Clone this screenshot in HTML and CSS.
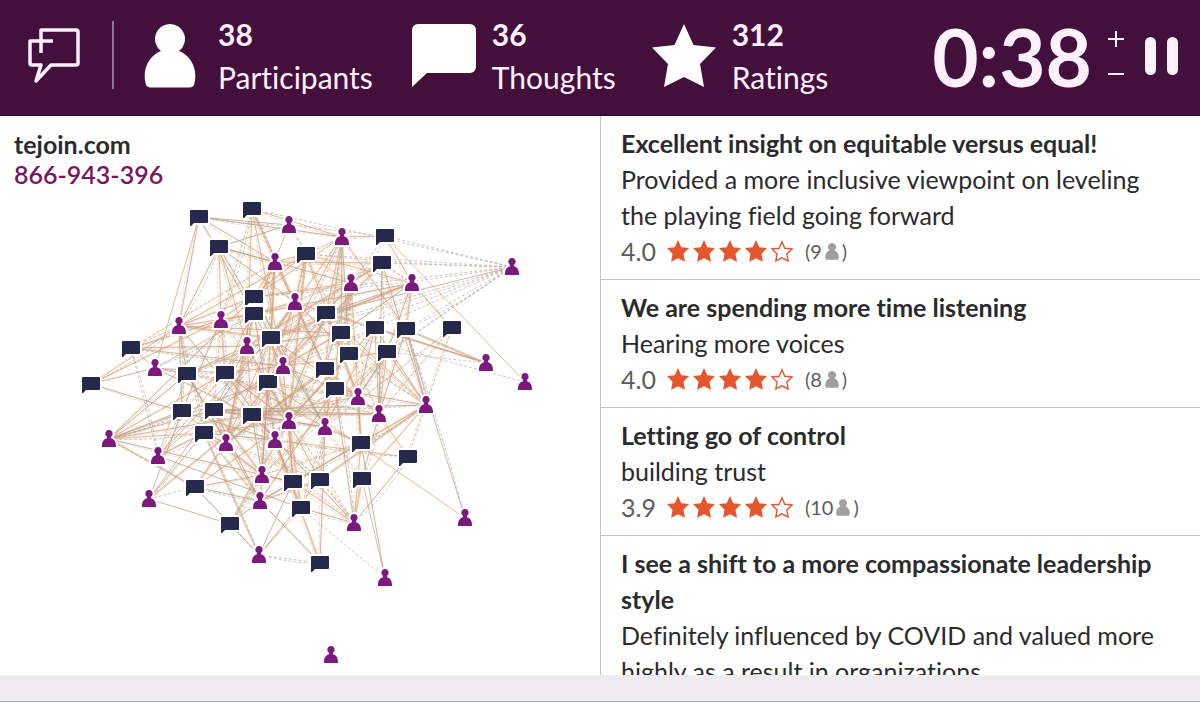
FILE: index.html
```html
<!DOCTYPE html>
<html lang="en">
<head>
<meta charset="utf-8">
<meta name="viewport" content="width=device-width, initial-scale=1">
<title>Exchange</title>
<link rel="stylesheet" href="styles.css">
</head>
<body>
<svg class="defs" aria-hidden="true">
  <symbol id="person" viewBox="0 0 52 64"><path d="M26 0a15 15 0 0 1 9 27C46 31 54 44 50.500 59Q50 63 46 63.500H6Q2 63 1.500 59C-2 44 6 31 17 27A15 15 0 0 1 26 0Z"/></symbol>
  <symbol id="thought" viewBox="0 0 64 64"><path d="M6 0h52a6 6 0 0 1 6 6v37a6 6 0 0 1-6 6H15L0 63V6a6 6 0 0 1 6-6Z"/></symbol>
  <symbol id="star" viewBox="0 0 64 64"><path d="M32 0l9.500 21L64 23.500 48 40l4 23-20-10-20 10 4-23L0 23.500 22.500 21Z"/></symbol>
  <symbol id="star-open" viewBox="0 0 64 64"><path d="M32 5l8 19 21 2-15 15 4 20-18-9-18 9 4-20L3 26l21-2Z" fill="none" stroke="currentColor" stroke-width="4"/></symbol>
</svg>

<header class="topbar">
  <svg class="logo" viewBox="0 0 52 56" role="img" aria-label="Logo"><path d="M13 25V2h35q2 0 2 2v31q0 2-2 2H23L8 53l5-16H4q-2 0-2-2V13h23" fill="none" stroke="currentColor" stroke-width="3.500" stroke-linejoin="round"/></svg>
  <div class="stat stat-first">
    <svg class="stat-icon person-icon"><use href="#person"/></svg>
    <p class="stat-text"><strong>38</strong><span>Participants</span></p>
  </div>
  <div class="stat">
    <svg class="stat-icon"><use href="#thought"/></svg>
    <p class="stat-text"><strong>36</strong><span>Thoughts</span></p>
  </div>
  <div class="stat">
    <svg class="stat-icon"><use href="#star"/></svg>
    <p class="stat-text"><strong>312</strong><span>Ratings</span></p>
  </div>
  <div class="timer">
    <span class="clock">0:38</span>
    <div class="adjust">
      <button type="button" aria-label="Add time"><svg viewBox="0 0 16 16"><path d="M8 0v16M0 8h16"/></svg></button>
      <button type="button" aria-label="Remove time"><svg viewBox="0 0 16 16"><path d="M0 8h16"/></svg></button>
    </div>
    <button type="button" class="pause" aria-label="Pause"><span></span><span></span></button>
  </div>
</header>

<main class="content">
  <section class="map">
    <div class="join"><strong>tejoin.com</strong><span>866-943-396</span></div>
    <svg class="graph" id="graph" viewBox="0 116 600 559" role="img" aria-label="Participants linked to thoughts"></svg>
  </section>
  <section class="thoughts">
    <article class="card">
      <h2>Excellent insight on equitable versus equal!</h2>
      <p>Provided a more inclusive viewpoint on leveling the playing field going forward</p>
      <div class="rating"><span class="score">4.0</span><span class="stars"><svg><use href="#star"/></svg><svg><use href="#star"/></svg><svg><use href="#star"/></svg><svg><use href="#star"/></svg><svg><use href="#star-open"/></svg></span><span class="count">(9<svg><use href="#person"/></svg>)</span></div>
    </article>
    <article class="card">
      <h2>We are spending more time listening</h2>
      <p>Hearing more voices</p>
      <div class="rating"><span class="score">4.0</span><span class="stars"><svg><use href="#star"/></svg><svg><use href="#star"/></svg><svg><use href="#star"/></svg><svg><use href="#star"/></svg><svg><use href="#star-open"/></svg></span><span class="count">(8<svg><use href="#person"/></svg>)</span></div>
    </article>
    <article class="card">
      <h2>Letting go of control</h2>
      <p>building trust</p>
      <div class="rating"><span class="score">3.9</span><span class="stars"><svg><use href="#star"/></svg><svg><use href="#star"/></svg><svg><use href="#star"/></svg><svg><use href="#star"/></svg><svg><use href="#star-open"/></svg></span><span class="count">(10<svg><use href="#person"/></svg>)</span></div>
    </article>
    <article class="card">
      <h2>I see a shift to a more compassionate leadership style</h2>
      <p>Definitely influenced by COVID and valued more highly as a result in organizations</p>
    </article>
  </section>
</main>
<footer class="bottombar"></footer>
<script src="graph.js"></script>
</body>
</html>
```

FILE: styles.css
```css
* { box-sizing: border-box; }

body {
  margin: 0;
  height: 100vh;
  display: flex;
  flex-direction: column;
  overflow: hidden;
  background: #fff;
  color: #2b2b2d;
  font-family: Lato, "Open Sans", sans-serif;
  font-variant-ligatures: none;
}

h2, p { margin: 0; }

button {
  padding: 0;
  border: 0;
  background: none;
  color: inherit;
  font: inherit;
  cursor: pointer;
}

.defs { position: absolute; width: 0; height: 0; }

.topbar {
  flex: none;
  display: flex;
  align-items: center;
  padding: 13px 22px 16px 28px;
  background: #43103c;
  border-bottom: 1px solid #2c0a2a;
  color: #fff0ff;
}

.logo { width: 52px; height: 56px; margin-right: 32px; }

.stat { display: flex; align-items: center; gap: 16px; margin-right: 36px; }
.stat-first { gap: 22px; position: relative; padding-left: 32px; margin-right: 39px; }
.stat-first::before {
  content: "";
  position: absolute;
  left: 0;
  top: 8px;
  width: 2px;
  height: 68px;
  background: #96739a;
}

.stat-icon { width: 64px; height: 64px; fill: #fff; }
.person-icon { width: 52px; }

.stat-text {
  display: flex;
  flex-direction: column;
  font-size: 30px;
  line-height: 43px;
}

.timer { display: flex; align-items: center; margin-left: auto; }
.clock { font-size: 80px; line-height: 84px; font-weight: 700; }
.adjust { display: flex; flex-direction: column; gap: 19px; margin: 0 21px 0 16px; }
.adjust button { display: flex; }
.adjust svg { width: 16px; height: 16px; fill: none; stroke: currentColor; stroke-width: 2; }
.pause { display: flex; gap: 11px; }
.pause span { width: 11px; height: 38px; border-radius: 6px; background: currentColor; }

.content {
  flex: 1;
  min-height: 0;
  display: grid;
  grid-template-columns: 1fr 1fr;
  overflow: hidden;
}

.map { display: grid; min-height: 0; }
.map > * { grid-area: 1 / 1; }
.join {
  display: flex;
  flex-direction: column;
  padding: 13px 14px;
  font-size: 25px;
  line-height: 30px;
}
.join span { color: #7a1566; font-weight: 600; }
.graph { width: 100%; height: 100%; min-height: 0; }

.edge { fill: none; stroke-width: 1; }
.edge-orange { stroke: #d9a06e; opacity: .7; }
.edge-rose { stroke: #cc9084; opacity: .7; }
.edge-olive { stroke: #aaa08a; opacity: .75; }
.edge-dots { stroke: #aeaaa2; stroke-dasharray: 3 2; opacity: .65; }
.edge-strong { stroke: #d4956e; stroke-width: 2; opacity: .5; }
.edge-haze { stroke: #f8cfa8; stroke-width: 5; opacity: .1; }
.edge-faint { stroke: #dcab84; stroke-dasharray: 4 2; opacity: .35; }
.node { stroke: #fff; stroke-width: 4; paint-order: stroke; }
.node-thought { fill: #26294b; }
.node-person { fill: #7b1a7c; }

.thoughts { min-width: 0; border-left: 1px solid #c4c4c6; overflow: hidden; }
.card {
  padding: 9px 20px 10px;
  border-bottom: 1px solid #c4c4c6;
  font-size: 25px;
  line-height: 36px;
}
.card h2 { font-size: 25px; line-height: 36px; font-weight: 700; }
.rating { display: flex; align-items: center; height: 36px; color: #5c5c5e; }
.score { font-size: 25px; }
.stars { display: flex; gap: 4px; margin: 0 12px 0 11px; color: #e4572e; }
.stars svg { width: 22px; height: 22px; fill: currentColor; }
.count { display: flex; align-items: center; font-size: 20px; }
.count svg { width: 14px; height: 17px; margin: 0 3px; fill: #a0a0a0; }

.bottombar { flex: none; height: 27px; background: #eeecef; border-bottom: 1px solid #a9a9ab; }
```

FILE: graph.js
```js
const thoughts = [
  [199,217],[252,209],[219,247],[306,254],[385,236],[382,263],[254,297],[254,314],[326,313],
  [271,338],[341,333],[375,328],[406,329],[452,328],[131,348],[349,354],[387,352],[91,384],
  [187,374],[225,373],[268,382],[325,369],[335,389],[182,411],[214,410],[252,415],[204,433],
  [361,443],[408,457],[195,487],[293,482],[320,480],[362,479],[301,508],[230,524],[320,563]
];

// Each participant: position, then the indexes of the thoughts they rated.
const people = [
  [289,225,[0,3,7,4,2]],
  [342,237,[1,0,3,10,15,21,8,9,20,12,6,4]],
  [275,262,[1,3,6,9,20,0,2,14,21,5,19,25]],
  [512,267,[3,4,1,6,8,10,11,12,9,5,22,16]],
  [412,283,[4,5,12,13,8,10,9,3,16,7,18]],
  [351,283,[3,5,8,10,15,22,6,20,4,2,9,21,27]],
  [295,302,[1,3,5,7,9,20,8,22,25,24,2,15]],
  [179,326,[0,2,17,14,6,7,18,23,9,26,3,25,10]],
  [221,320,[2,7,19,14,17,1,24,3,20,23]],
  [247,346,[1,2,5,8,14,19,23,25,31,18,10,24]],
  [283,366,[0,1,3,8,10,14,19,24,25,11,30,22,5,16]],
  [155,368,[0,14,17,18,25,7,19]],
  [486,363,[11,12,8,16]],
  [525,382,[4,10]],
  [358,397,[12,16,11,22,8,20,27,25,9,3,18]],
  [426,405,[13,16,12,11,27,32,31,22,24,30,5,8,10,28,15]],
  [379,414,[16,11,13,12,25,21,28,5,3,24,32,18]],
  [289,421,[9,8,20,15,22,24,3,30,26,29,21,11,33,19,34]],
  [325,427,[10,16,6,21,31,32,24,25,33,35,27,11,13,2,19]],
  [109,439,[18,19,23,24,6,26,29,30,20,25]],
  [275,440,[17,7,20,25,30,31,33,18,8,26,35,28,19]],
  [226,443,[7,9,18,24,26,20,15,31,29,6,21]],
  [158,456,[14,23,18,26,19,24,33,9]],
  [262,475,[24,25,29,20,30,34,26,16,23,9,27]],
  [149,499,[23,26,24,25,34,29]],
  [260,501,[18,29,26,30,20,34,22,27,35,31,24]],
  [354,523,[28,32,31,30,33,27,25,24,20,22]],
  [465,518,[12,20]],
  [259,555,[26,34,33,31,35,29,30]],
  [385,578,[32,33,27]],
  [331,655,[]]
];

const kinds = ["olive", "orange", "dots", "rose", "strong", "olive", "orange", "dots", "rose"];
const svg = document.getElementById("graph");

function add(name, attributes) {
  const element = document.createElementNS("http://www.w3.org/2000/svg", name);
  for (const key in attributes) element.setAttribute(key, attributes[key]);
  svg.appendChild(element);
}

// A soft glow that builds up where many ratings cross.
people.forEach(([x, y, rated]) => {
  if (rated.length < 9 || x === 512) return;
  rated.forEach((t) => {
    add("path", { class: "edge edge-haze", d: `M${x} ${y}L${thoughts[t][0]} ${thoughts[t][1]}` });
  });
});

people.forEach(([x, y, rated], i) => {
  rated.forEach((t, j) => {
    const [tx, ty] = thoughts[t];
    const kind = x === 512 && j !== 4 ? "dots" : kinds[(i * 5 + j * 4 + t) % kinds.length];
    add("path", { class: "edge edge-" + kind, d: `M${x} ${y}L${tx} ${ty}` });
    if ((i + t) % 3 === 0) {
      add("path", { class: "edge edge-dots", d: `M${x} ${y}Q${(x + tx) / 2 + 6} ${(y + ty) / 2 + 5} ${tx} ${ty}` });
    } else if (rated.length > 8 && x !== 512) {
      add("path", { class: "edge edge-faint", d: `M${x} ${y}Q${(x + tx) / 2 - 5} ${(y + ty) / 2 + 4} ${tx} ${ty}` });
    }
  });
});

thoughts.forEach(([x, y]) => {
  add("path", { class: "node node-thought", d: `M${x - 8} ${y - 7}h16q1 0 1 1v11q0 1-1 1h-13l-3 3h-1v-15q0-1 1-1Z` });
});

people.forEach(([x, y]) => {
  add("path", { class: "node node-person", d: `M${x} ${y - 9}a3.600 3.600 0 0 1 2.200 6.500v2c3 .5 5 3 4.800 8.500h-14c-.2-5.500 1.800-8 4.800-8.500v-2a3.600 3.600 0 0 1 2.200-6.500Z` });
});
```
